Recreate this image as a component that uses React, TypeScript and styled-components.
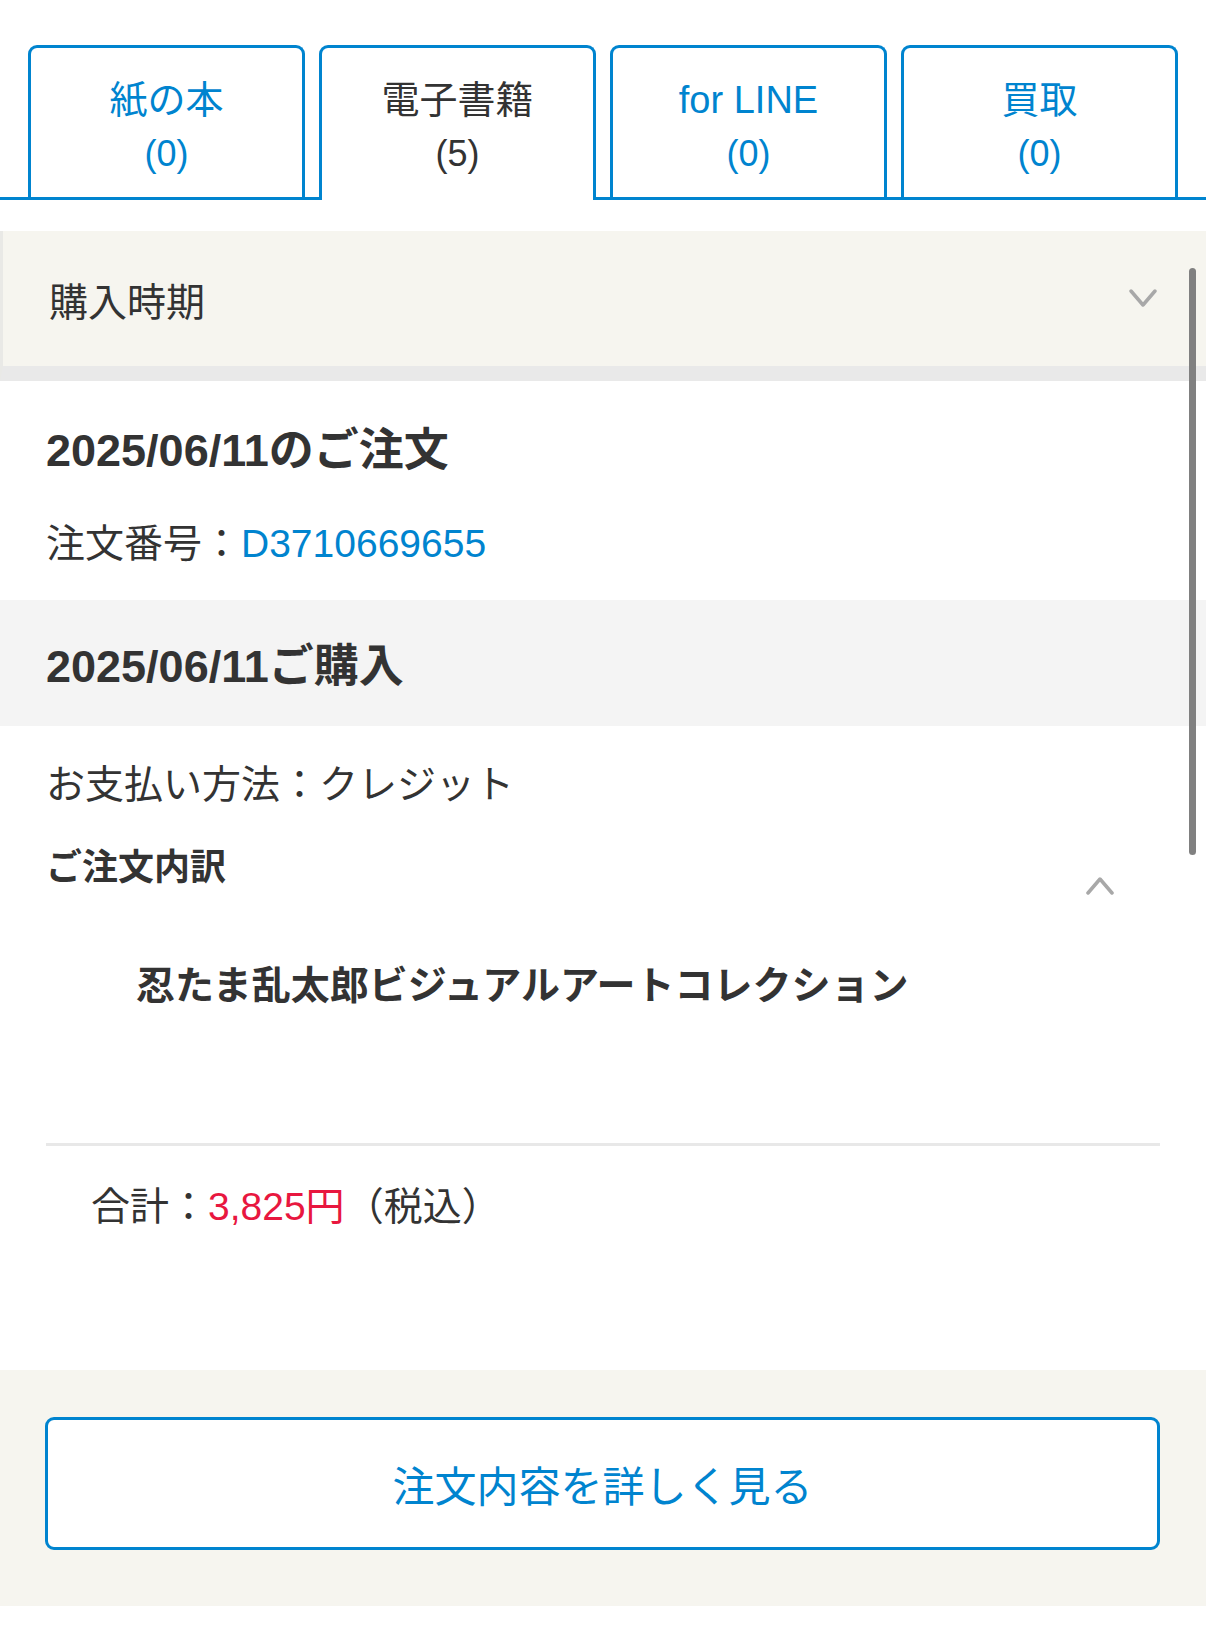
import React from "react";
import styled, { createGlobalStyle } from "styled-components";

const BLUE = "#0084cf";
const TEXT = "#333333";

const Global = createGlobalStyle`
  html, body { margin: 0; padding: 0; background: #ffffff; }
  body {
    font-family: "Liberation Sans", "Noto Sans CJK JP", sans-serif;
    color: ${TEXT};
  }
  * { box-sizing: border-box; }
`;

const Page = styled.div`
  position: relative;
  width: 1206px;
  min-height: 1630px;
  background: #ffffff;
`;

const TabBar = styled.div`
  display: flex;
  gap: 14px;
  padding: 45px 28px 0 28px;
  border-bottom: 3px solid ${BLUE};
`;

const Tab = styled.div<{ $active?: boolean }>`
  flex: 1;
  height: ${(p) => (p.$active ? "155px" : "152px")};
  margin-bottom: ${(p) => (p.$active ? "-3px" : "0")};
  border: 3px solid ${BLUE};
  border-bottom: none;
  border-radius: 9px 9px 0 0;
  background: #ffffff;
  display: flex;
  flex-direction: column;
  align-items: center;
  padding-top: 26px;
  color: ${(p) => (p.$active ? TEXT : BLUE)};
  font-size: 38px;
  line-height: 53px;
`;

const TabCount = styled.span`
  font-size: 36px;
`;

const Filter = styled.div`
  margin-top: 31px;
  height: 150px;
  background: #f6f5ef;
  border-left: 3px solid #e9e9e6;
  border-bottom: 15px solid #e9e9e9;
  display: flex;
  align-items: center;
  justify-content: space-between;
  padding: 0 49px 0 46px;
  font-size: 39px;
  color: ${TEXT};
`;

const OrderBlock = styled.div`
  padding: 40px 46px 28px;
`;

const Heading = styled.div`
  font-size: 45px;
  font-weight: 700;
  line-height: 60px;
  color: ${TEXT};
`;

const Line = styled.div<{ $mt?: number }>`
  margin-top: ${(p) => p.$mt ?? 0}px;
  font-size: 39px;
  line-height: 56px;
  color: ${TEXT};
`;

const Link = styled.span`
  color: ${BLUE};
`;

const Band = styled.div`
  background: #f4f4f4;
  height: 126px;
  padding: 37px 46px 0;
`;

const Detail = styled.div`
  padding: 31px 46px 0;
`;

const BreakdownHead = styled.div`
  margin-top: 30px;
  display: flex;
  justify-content: space-between;
  align-items: flex-start;
  padding-right: 46px;
`;

const SubTitle = styled.div`
  font-size: 36px;
  font-weight: 700;
  line-height: 50px;
  color: ${TEXT};
`;

const ChevronBox = styled.div`
  margin-top: 33px;
  display: flex;
`;

const Product = styled.div`
  margin-top: 63px;
  padding-left: 90px;
  font-size: 39px;
  font-weight: 700;
  line-height: 56px;
  color: ${TEXT};
`;

const Divider = styled.div`
  margin-top: 129px;
  height: 3px;
  background: #e8e8e8;
`;

const Total = styled.div`
  margin-top: 33px;
  padding-left: 45px;
  font-size: 39px;
  line-height: 56px;
  color: ${TEXT};
`;

const Price = styled.span`
  color: #e8173f;
`;

const Footer = styled.div`
  margin-top: 135px;
  background: #f6f5ef;
  padding: 47px 46px 56px 45px;
`;

const DetailButton = styled.div`
  height: 133px;
  border: 3px solid ${BLUE};
  border-radius: 9px;
  background: #ffffff;
  display: flex;
  align-items: center;
  justify-content: center;
  color: ${BLUE};
  font-size: 42px;
`;

const Scrollbar = styled.div`
  position: absolute;
  left: 1189px;
  top: 268px;
  width: 7px;
  height: 587px;
  border-radius: 4px;
  background: #808080;
`;

const Chevron = ({ up }: { up?: boolean }) => (
  <svg width="28" height="19" viewBox="0 0 28 19" fill="none">
    <polyline
      points={up ? "2,17 14,3 26,17" : "2,2 14,16 26,2"}
      stroke="#a8a8a8"
      strokeWidth="3.5"
      strokeLinecap="round"
      strokeLinejoin="round"
    />
  </svg>
);

const tabs = [
  { label: "紙の本", count: 0 },
  { label: "電子書籍", count: 5, active: true },
  { label: "for LINE", count: 0 },
  { label: "買取", count: 0 },
];

export default function App() {
  return (
    <Page>
      <Global />
      <TabBar>
        {tabs.map((t) => (
          <Tab key={t.label} $active={t.active}>
            <span>{t.label}</span>
            <TabCount>({t.count})</TabCount>
          </Tab>
        ))}
      </TabBar>
      <Filter>
        <span>購入時期</span>
        <Chevron />
      </Filter>
      <OrderBlock>
        <Heading>2025/06/11のご注文</Heading>
        <Line $mt={35}>
          注文番号：<Link>D3710669655</Link>
        </Line>
      </OrderBlock>
      <Band>
        <Heading>2025/06/11ご購入</Heading>
      </Band>
      <Detail>
        <Line>お支払い方法：クレジット</Line>
        <BreakdownHead>
          <SubTitle>ご注文内訳</SubTitle>
          <ChevronBox>
            <Chevron up />
          </ChevronBox>
        </BreakdownHead>
        <Product>忍たま乱太郎ビジュアルアートコレクション</Product>
        <Divider />
        <Total>
          合計：<Price>3,825円</Price>（税込）
        </Total>
      </Detail>
      <Footer>
        <DetailButton>注文内容を詳しく見る</DetailButton>
      </Footer>
      <Scrollbar />
    </Page>
  );
}
